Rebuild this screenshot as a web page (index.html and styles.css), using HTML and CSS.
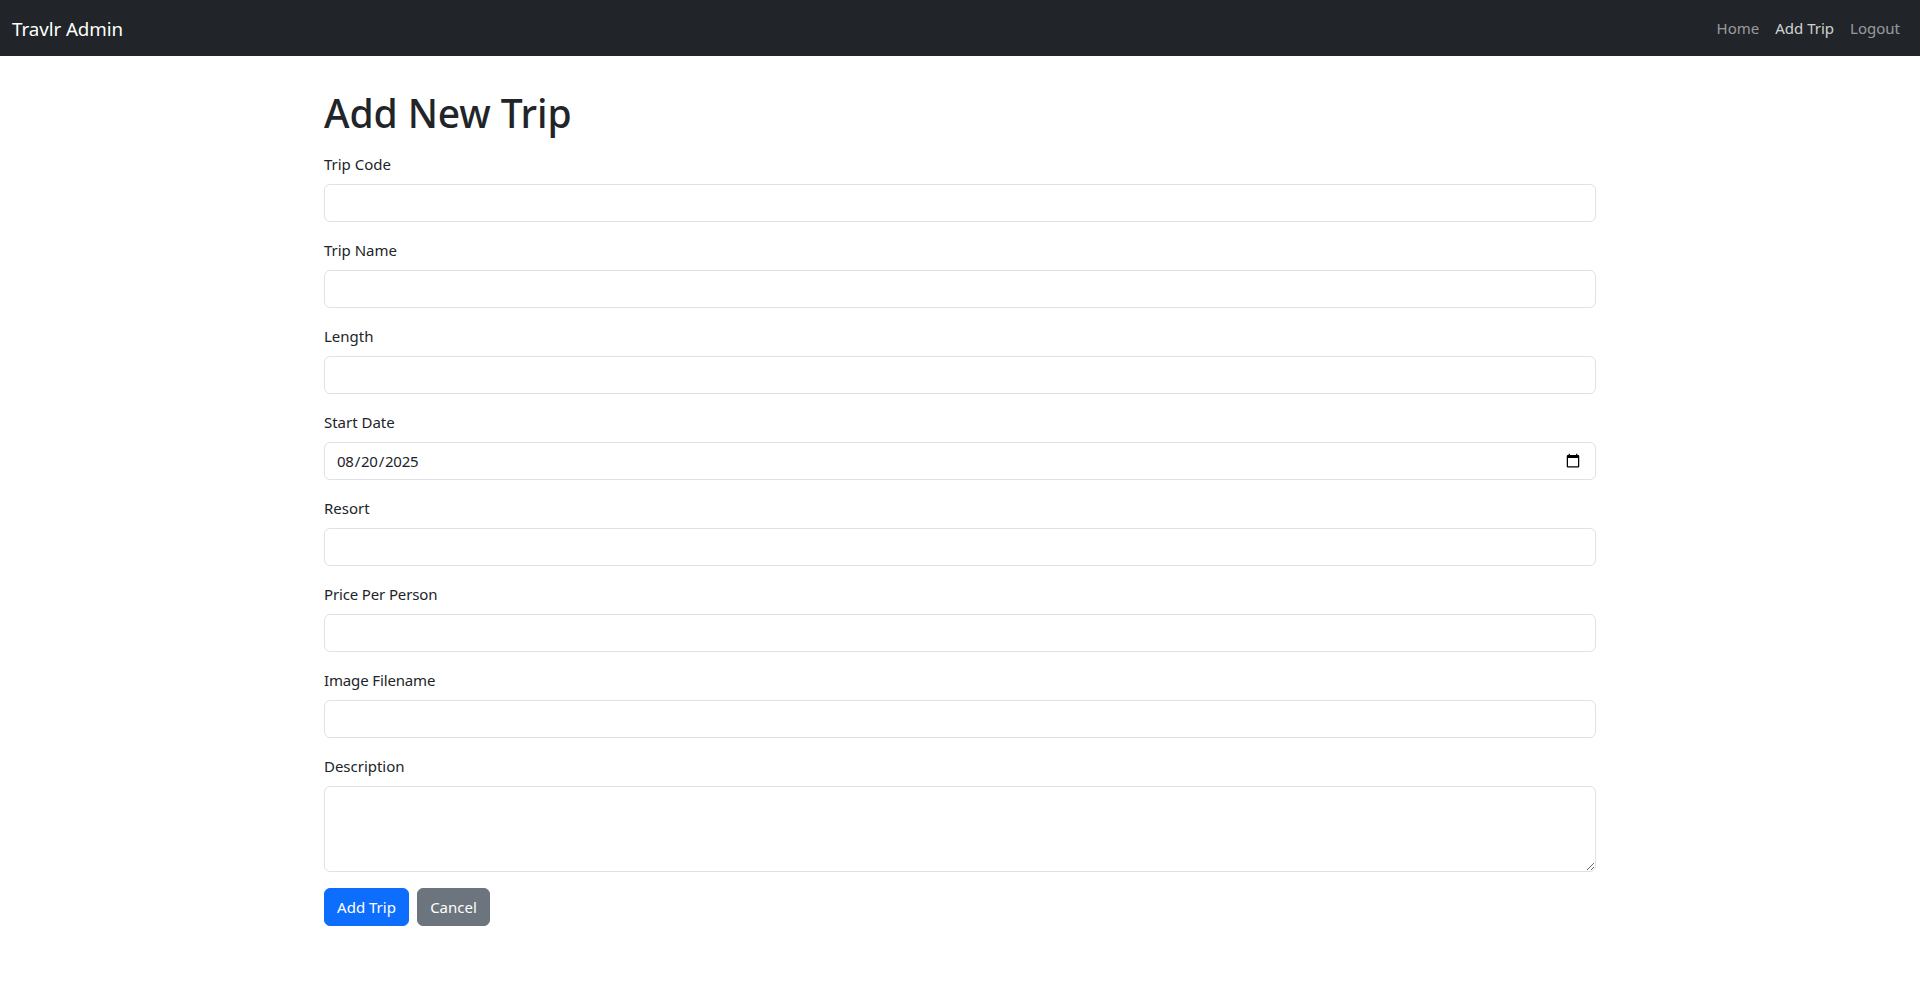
FILE: index.html
```html
<!DOCTYPE html>
<html lang="en">
<head>
<meta charset="utf-8">
<title>Travlr Admin</title>
<link rel="stylesheet" href="styles.css">
</head>
<body>
<nav class="navbar">
  <a class="brand">Travlr Admin</a>
  <ul class="nav">
    <li><a class="nav-link">Home</a></li>
    <li><a class="nav-link active">Add Trip</a></li>
    <li><a class="nav-link">Logout</a></li>
  </ul>
</nav>
<main class="container">
  <h1 class="title">Add New Trip</h1>
  <form>
    <div class="field"><label class="label" for="code">Trip Code</label><input class="control" id="code" type="text"></div>
    <div class="field"><label class="label" for="name">Trip Name</label><input class="control" id="name" type="text"></div>
    <div class="field"><label class="label" for="length">Length</label><input class="control" id="length" type="text"></div>
    <div class="field"><label class="label" for="start">Start Date</label><input class="control date" id="start" type="date" value="2025-08-20"></div>
    <div class="field"><label class="label" for="resort">Resort</label><input class="control" id="resort" type="text"></div>
    <div class="field"><label class="label tight" for="price">Price Per Person</label><input class="control" id="price" type="text"></div>
    <div class="field"><label class="label tight" for="image">Image Filename</label><input class="control" id="image" type="text"></div>
    <div class="field"><label class="label" for="desc">Description</label><textarea class="control area" id="desc" rows="3"></textarea></div>
    <div class="actions"><button class="btn primary" type="button">Add Trip</button><button class="btn secondary" type="button">Cancel</button></div>
  </form>
</main>
</body>
</html>
```
FILE: styles.css
```css
*, *::before, *::after { box-sizing: border-box; }
body { margin: 0; font: 400 15px/24px "Segoe UI", "Noto Sans", "Open Sans", sans-serif; color: #212529; background: #fff; }
.navbar { display: flex; align-items: center; justify-content: space-between; height: 56px; padding: 8px 12px; background: #212529; }
.brand { padding-top: 1px; font-size: 18.75px; line-height: 30px; letter-spacing: -.06px; color: #fff; }
.nav { display: flex; margin: 0; padding: 0; list-style: none; }
.nav-link { display: block; padding: 8px; color: rgba(255,255,255,.55); }
.nav-link.active { color: rgba(255,255,255,.8); }
.container { width: 1296px; margin: 0 auto; padding: 33px 12px 0; }
.title { margin: 0 0 15px; font-size: 39px; font-weight: 550; line-height: 48px; letter-spacing: -.1px; }
.field { margin-bottom: 16px; }
.label { display: inline-block; margin-bottom: 8px; vertical-align: top; letter-spacing: -.02px; }
.tight { letter-spacing: -.14px; }
.control { display: block; width: 100%; height: 38px; padding: 6px 12px; border: 1px solid #dee2e6; border-radius: 6px; font: inherit; color: #212529; background: #fff; }
.date { padding-left: 11px; letter-spacing: -.25px; }
.date::-webkit-calendar-picker-indicator { font-size: 16px; }
.area { height: 86px; resize: vertical; }
.actions { display: flex; gap: 8px; }
.btn { width: 85px; padding: 6px 0; border: 1px solid; border-radius: 6px; font: inherit; color: #fff; }
.primary { background: #0d6efd; border-color: #0d6efd; }
.secondary { width: 73px; background: #6c757d; border-color: #6c757d; }
```
